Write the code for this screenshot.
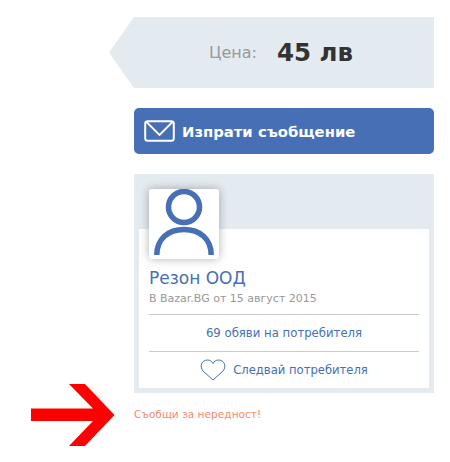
<script>
</script>

<div class="page">
  <div class="column">
    <div class="price">
      <span class="label">Цена:</span>
      <span class="value">45 лв</span>
    </div>

    <button class="send">
      <svg class="mail" width="32" height="24" viewBox="0 0 32 24" fill="none" stroke="#fff">
        <rect x="1.2" y="2.2" width="28.6" height="19.6" rx="2.5" stroke-width="2" />
        <path d="M2.500 3 L15.500 16 L28.500 3" stroke-width="1.800" />
      </svg>
      <span>Изпрати съобщение</span>
    </button>

    <section class="card">
      <div class="inner">
        <div class="avatar">
          <svg width="70" height="70" viewBox="0 0 70 70" fill="none" stroke="#466fb6" stroke-width="5.500">
            <circle cx="35" cy="18" r="15.500" />
            <path d="M7.800 66 C7.800 50 19 40.500 35 40.500 C51 40.500 62.200 50 62.200 66" />
          </svg>
        </div>
        <div class="name">Резон ООД</div>
        <div class="since">В Bazar.BG от 15 август 2015</div>
        <div class="row">69 обяви на потребителя</div>
        <div class="row follow">
          <svg width="26" height="22" viewBox="0 0 26 22" fill="none" stroke="#466fb6" stroke-width="1">
            <path d="M13 21 L3 12 C-1 7 2 1 7.500 1 C10 1 12 2.500 13 4.500 C14 2.500 16 1 18.500 1 C24 1 27 7 23 12 Z" />
          </svg>
          <span>Следвай потребителя</span>
        </div>
      </div>
    </section>

    <a class="report" href="#report">Съобщи за нередност!</a>
  </div>

  <svg class="arrow" width="84" height="62" viewBox="0 0 84 62">
    <path d="M0 24.500 H62 L38 0 H54 L83.500 31 L54 62 H38 L62 37 H0 Z" fill="#fe0000" />
  </svg>
</div>

<style>
  :global(body) {
    margin: 0;
    background: #fff;
    font-family: "DejaVu Sans", Verdana, sans-serif;
  }

  .page {
    position: relative;
    width: 450px;
    height: 462px;
    padding: 17px 16px 0 134px;
    box-sizing: border-box;
    overflow: hidden;
  }

  .column {
    display: flex;
    flex-direction: column;
    width: 300px;
  }

  .price {
    position: relative;
    display: flex;
    align-items: center;
    justify-content: center;
    gap: 20px;
    height: 71px;
    padding-right: 6px;
    box-sizing: border-box;
    background: #e3eaf0;
  }

  .price::before {
    content: "";
    position: absolute;
    left: -25px;
    top: 0;
    width: 25px;
    height: 71px;
    background: #e3eaf0;
    clip-path: polygon(100% 0, 100% 100%, 0 50%);
  }

  .label {
    font-size: 16px;
    color: #999;
  }

  .value {
    font-size: 24.500px;
    font-weight: 700;
    color: #333;
  }

  .send {
    display: flex;
    align-items: center;
    gap: 6px;
    height: 46px;
    margin-top: 20px;
    padding: 0 0 0 10px;
    border: 0;
    border-radius: 5px;
    background: #466fb6;
    color: #fff;
    font: 700 14.800px "DejaVu Sans", Verdana, sans-serif;
  }

  .mail {
    display: block;
  }

  .card {
    margin-top: 20px;
    padding: 55px 5px 5px;
    background: #e3eaf0;
  }

  .inner {
    position: relative;
    height: 159px;
    padding: 30px 10px 0;
    box-sizing: border-box;
    background: #fff;
  }

  .avatar {
    position: absolute;
    left: 10px;
    top: -40px;
    width: 70px;
    height: 70px;
    border-radius: 3px;
    background: #fff;
    box-shadow: 0 0 10px rgba(0, 0, 0, 0.3);
  }

  .avatar svg {
    display: block;
  }

  .name {
    margin-top: 9px;
    font-size: 17px;
    line-height: 20px;
    color: #466fb6;
  }

  .since {
    margin-top: 4px;
    padding-bottom: 8px;
    font-size: 11px;
    line-height: 14px;
    color: #999;
  }

  .row {
    display: flex;
    align-items: center;
    justify-content: center;
    height: 36px;
    border-top: 1px solid #ccc;
    font-size: 11.700px;
    color: #466fb6;
  }

  .follow {
    gap: 7px;
    font-size: 11.600px;
  }

  .report {
    margin-top: 14px;
    font-size: 10.600px;
    line-height: 14px;
    color: #f58a70;
    text-decoration: none;
  }

  .arrow {
    position: absolute;
    left: 31px;
    top: 384px;
  }
</style>
